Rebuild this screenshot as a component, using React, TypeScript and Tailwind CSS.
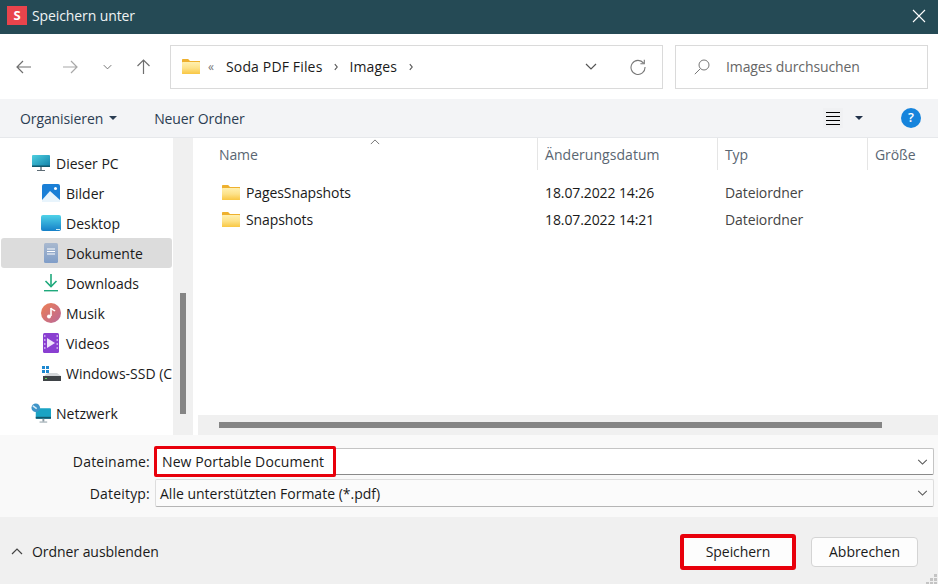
import { ReactNode } from "react";

function FolderIcon({ className, id }: { className: string; id: string }) {
  return (
    <svg viewBox="0 0 18 15" className={className}>
      <defs>
        <linearGradient id={id} x1="0" y1="0" x2="0" y2="1">
          <stop offset="0" stopColor="#fff0b0" />
          <stop offset="0.5" stopColor="#fde289" />
          <stop offset="1" stopColor="#f9c743" />
        </linearGradient>
      </defs>
      <path d="M0 1C0 .4.4 0 1 0h4.6c.4 0 .7.1 1 .4L8 2h10v3H0z" fill="#eeb02e" />
      <rect x="0" y="3" width="18" height="12" rx="0.6" fill={`url(#${id})`} />
    </svg>
  );
}

function MonitorIcon() {
  return (
    <svg viewBox="0 0 18 16" className="w-[18px] h-4">
      <defs>
        <linearGradient id="mon" x1="0" y1="0" x2="1" y2="1">
          <stop offset="0" stopColor="#4fd0e0" />
          <stop offset="1" stopColor="#0f7fa8" />
        </linearGradient>
      </defs>
      <rect width="18" height="12" rx="1" fill="url(#mon)" />
      <rect x="0" y="10.5" width="18" height="1.5" fill="#11596e" />
      <rect x="8" y="12" width="2" height="3" fill="#8a9aa3" />
      <rect x="5" y="15" width="8" height="1" fill="#5e6c75" />
    </svg>
  );
}

function PicturesIcon() {
  return (
    <svg viewBox="0 0 18 18" className="w-[18px] h-[18px]">
      <rect width="18" height="18" rx="2" fill="#1a7fd6" />
      <circle cx="13.5" cy="4.5" r="1.5" fill="#fff" />
      <path d="M0 16l8-9 10 9v2H0z" fill="#e8f4fc" />
    </svg>
  );
}

function DesktopIcon() {
  return (
    <svg viewBox="0 0 20 16" className="w-5 h-4">
      <defs>
        <linearGradient id="desk" x1="0" y1="0" x2="0" y2="1">
          <stop offset="0" stopColor="#4fd2e8" />
          <stop offset="1" stopColor="#1580c8" />
        </linearGradient>
      </defs>
      <rect width="20" height="16" rx="2" fill="url(#desk)" />
      <rect x="15" y="14" width="4" height="1" fill="#cfeef8" />
    </svg>
  );
}

function DocumentIcon() {
  return (
    <svg viewBox="0 0 14 20" className="w-[14px] h-5">
      <defs>
        <linearGradient id="doc" x1="0" y1="0" x2="0" y2="1">
          <stop offset="0" stopColor="#a9b9cf" />
          <stop offset="1" stopColor="#7f9dc8" />
        </linearGradient>
      </defs>
      <rect width="14" height="20" rx="1.5" fill="url(#doc)" />
      <path d="M3 6h8M3 8.5h8M3 11h8" stroke="#fff" strokeWidth="1" />
    </svg>
  );
}

function DownloadIcon() {
  return (
    <svg viewBox="0 0 14 18" className="w-[14px] h-[18px]">
      <path d="M7 0v12" stroke="#1fa97c" strokeWidth="1.6" />
      <path d="M1.5 7L7 12.5 12.5 7" fill="none" stroke="#1fa97c" strokeWidth="1.6" />
      <rect x="0" y="16" width="14" height="1.4" fill="#1fa97c" />
    </svg>
  );
}

function MusicIcon() {
  return (
    <svg viewBox="0 0 20 20" className="w-5 h-5">
      <defs>
        <linearGradient id="mus" x1="0" y1="0" x2="1" y2="1">
          <stop offset="0" stopColor="#ee7f52" />
          <stop offset="1" stopColor="#b9689a" />
        </linearGradient>
      </defs>
      <circle cx="10" cy="10" r="10" fill="url(#mus)" />
      <path d="M10 5v8" stroke="#fff" strokeWidth="1.6" />
      <path d="M10 5c1 2 3 2 4 3" fill="none" stroke="#fff" strokeWidth="1.6" />
      <circle cx="8" cy="13.5" r="2" fill="#fff" />
    </svg>
  );
}

function VideoIcon() {
  return (
    <svg viewBox="0 0 16 20" className="w-4 h-5">
      <rect width="16" height="20" rx="1.5" fill="#8a3fd1" />
      <path d="M4 5v10l8-5z" fill="#efe4fb" />
      <path d="M1 3h1.5M1 7h1.5M1 11h1.5M1 15h1.5M13.5 3H15M13.5 7H15M13.5 11H15M13.5 15H15" stroke="#d9c2f3" strokeWidth="1.4" />
    </svg>
  );
}

function DriveIcon() {
  return (
    <svg viewBox="0 0 19 15" className="w-[19px] h-[15px]">
      <path d="M0 0h3v3H0zM4 0h3v3H4zM0 4h3v3H0zM4 4h3v3H4z" fill="#1e88d0" />
      <path d="M3 9l3-2h9l4 3v1H2z" fill="#d4d7da" />
      <rect x="1" y="10" width="18" height="5" fill="#3f4347" />
      <rect x="3" y="12" width="2" height="1" fill="#5ad15a" />
    </svg>
  );
}

function NetworkIcon() {
  return (
    <svg viewBox="0 0 21 20" className="w-5 h-5">
      <rect x="5" y="5" width="16" height="11" rx="1" fill="#1aa3c4" />
      <rect x="5" y="14" width="16" height="2" fill="#11596e" />
      <rect x="12" y="16" width="2" height="3" fill="#8a9aa3" />
      <rect x="9" y="19" width="8" height="1" fill="#8a9aa3" />
      <circle cx="5" cy="4.5" r="4.5" fill="#3f94c8" />
      <path d="M2 2.5l4 3" stroke="#d7ecf7" strokeWidth="1.6" />
    </svg>
  );
}

function Chevron({ className, d = "M1 1l5 5 5-5" }: { className: string; d?: string }) {
  return (
    <svg viewBox="0 0 12 7" className={className} fill="none" stroke="currentColor" strokeWidth="1.2">
      <path d={d} />
    </svg>
  );
}

function Crumb() {
  return (
    <svg viewBox="0 0 5 9" className="w-1 h-2 text-[#555]" fill="none" stroke="currentColor" strokeWidth="1.4">
      <path d="M1 1l3 3.5L1 8" />
    </svg>
  );
}

function NavRow({ icon, label, child, active }: { icon: ReactNode; label: string; child?: boolean; active?: boolean }) {
  return (
    <div className={`h-[30px] ml-px w-[171px] rounded-[3px] flex items-center overflow-hidden whitespace-nowrap ${active ? "bg-[#dcdcdc]" : ""} ${child ? "pl-10" : "pl-[30px]"}`}>
      <span className="w-5 mr-[5px] flex justify-center items-center shrink-0">{icon}</span>
      <span className="text-[#1a1a1a] tracking-[0px]">{label}</span>
    </div>
  );
}

function FileRow({ name, date, id }: { name: string; date: string; id: string }) {
  return (
    <div className="h-[27px] flex items-center text-[#1a1a1a]">
      <div className="w-[347px] pl-6 flex items-center gap-1.5">
        <FolderIcon id={id} className="w-[18px] h-[15px]" />
        <span>{name}</span>
      </div>
      <span className="w-[180px]">{date}</span>
      <span className="text-[#444]">Dateiordner</span>
    </div>
  );
}

export default function App() {
  return (
    <div className="w-[938px] h-[584px] overflow-hidden relative flex flex-col bg-white text-[14px] font-['Open_Sans','Liberation_Sans',sans-serif] tracking-[-0.1px]">
      {/* title bar */}
      <div className="h-[34px] shrink-0 bg-[#254a55] flex items-center pl-[7px] pr-3 pb-[3px] text-white">
        <div className="w-5 h-[19px] bg-[#e9444c] flex items-center justify-center font-bold text-[13px]">S</div>
        <span className="ml-[5px] text-[#eef3f4]">Speichern unter</span>
        <svg viewBox="0 0 14 14" className="ml-auto w-[14px] h-[14px]" fill="none" stroke="#fff" strokeWidth="1.1">
          <path d="M1 1l12 12M13 1L1 13" />
        </svg>
      </div>

      {/* navigation */}
      <div className="h-[65px] shrink-0 flex items-center pl-4 pr-[10px]">
        <svg viewBox="0 0 16 14" className="w-4 h-[14px] text-[#6f6f6f]" fill="none" stroke="currentColor" strokeWidth="1.2">
          <path d="M15 7H1M7 1L1 7l6 6" />
        </svg>
        <svg viewBox="0 0 16 14" className="ml-[30px] w-4 h-[14px] text-[#a8a8a8]" fill="none" stroke="currentColor" strokeWidth="1.2">
          <path d="M1 7h14M9 1l6 6-6 6" />
        </svg>
        <Chevron className="ml-[25px] w-[9px] h-[6px] text-[#666]" />
        <svg viewBox="0 0 14 16" className="ml-6 w-[15px] h-4 text-[#6f6f6f]" fill="none" stroke="currentColor" strokeWidth="1.2">
          <path d="M7 15V1M1 7l6-6 6 6" />
        </svg>
        <div className="ml-[19px] w-[493px] h-[44px] border border-[#dadada] flex items-center pl-[11px] pr-4 text-[#1a1a1a]">
          <FolderIcon id="addr" className="w-[18px] h-[15px]" />
          <span className="ml-2 w-[18px] text-[#777] text-[12px] leading-none">«</span>
          <span className="tracking-[0.15px] pb-px">Soda PDF Files</span>
          <span className="ml-3"><Crumb /></span>
          <span className="ml-[11px] tracking-[0.15px] pb-px">Images</span>
          <span className="ml-3"><Crumb /></span>
          <Chevron className="ml-auto w-[12px] h-[7px] text-[#555]" />
          <svg viewBox="0 0 16 16" className="ml-[33px] w-4 h-4 text-[#777]" fill="none" stroke="currentColor" strokeWidth="1.1">
            <path d="M13.6 4.2A7 7 0 1 0 15 8" />
            <path d="M14.3.8v3.9h-3.9" />
          </svg>
        </div>
        <div className="ml-3 w-[253px] h-[44px] border border-[#dadada] flex items-center pl-[18px] text-[#666]">
          <svg viewBox="0 0 16 16" className="w-4 h-4 text-[#777]" fill="none" stroke="currentColor" strokeWidth="1">
            <circle cx="10" cy="6" r="5" />
            <path d="M6.3 9.7L.8 15.2" />
          </svg>
          <span className="ml-4">Images durchsuchen</span>
        </div>
      </div>

      {/* toolbar */}
      <div className="h-[39px] shrink-0 bg-[#f3f4f6] border-b border-[#e6e8eb] flex items-center pl-5 pr-[17px] text-[#2b3d52]">
        <span>Organisieren</span>
        <span className="ml-[6px] w-0 h-0 border-x-4 border-x-transparent border-t-[4px] border-t-[#2b3d52]" />
        <span className="ml-[37px]">Neuer Ordner</span>
        <div className="ml-auto w-5 h-5 bg-[#f0f1f3] flex flex-col items-center justify-center gap-[3px]">
          <span className="block w-[14px] h-px bg-black" />
          <span className="block w-[14px] h-px bg-black" />
          <span className="block w-[14px] h-px bg-black" />
          <span className="block w-[14px] h-px bg-black" />
        </div>
        <span className="ml-3 w-0 h-0 border-x-4 border-x-transparent border-t-[4px] border-t-[#22324a]" />
        <div className="ml-[38px] w-5 h-5 rounded-full bg-[#1684dc] text-white text-[13px] font-semibold flex items-center justify-center">?</div>
      </div>

      {/* body */}
      <div className="h-[297px] shrink-0 flex">
        <div className="w-[173px] shrink-0 pt-[10px]">
          <NavRow icon={<MonitorIcon />} label="Dieser PC" />
          <NavRow child icon={<PicturesIcon />} label="Bilder" />
          <NavRow child icon={<DesktopIcon />} label="Desktop" />
          <NavRow child active icon={<DocumentIcon />} label="Dokumente" />
          <NavRow child icon={<DownloadIcon />} label="Downloads" />
          <NavRow child icon={<MusicIcon />} label="Musik" />
          <NavRow child icon={<VideoIcon />} label="Videos" />
          <NavRow child icon={<DriveIcon />} label="Windows-SSD (C:)" />
          <div className="h-[10px]" />
          <NavRow icon={<NetworkIcon />} label="Netzwerk" />
        </div>
        <div className="w-5 shrink-0 bg-[#f0f0f0] pt-[155px] pl-[7px]">
          <div className="w-[6px] h-[121px] bg-[#858585]" />
        </div>
        <div className="flex-1 ml-[5px] min-w-0 flex flex-col">
          <div className="flex-1 relative overflow-hidden">
            <Chevron className="absolute left-[172px] top-[1px] w-[10px] h-[6px] text-[#777]" d="M1 6l5-5 5 5" />
            <div className="h-[32px] flex text-[#5a6672]">
              <div className="w-[339px] pl-[21px] pt-1.5">Name</div>
              <div className="w-[180px] border-l border-[#e5e5e5] pl-[7px] pt-1.5 tracking-[0.05px]">Änderungsdatum</div>
              <div className="w-[150px] border-l border-[#e5e5e5] pl-[7px] pt-1.5">Typ</div>
              <div className="border-l border-[#e5e5e5] pl-[7px] pt-1.5">Größe</div>
            </div>
            <div className="pt-[9px]">
              <FileRow id="f1" name="PagesSnapshots" date="18.07.2022 14:26" />
              <FileRow id="f2" name="Snapshots" date="18.07.2022 14:21" />
            </div>
          </div>
          <div className="h-5 shrink-0 bg-[#f0f0f0] pl-[21px] pt-[7px]">
            <div className="w-[663px] h-[6px] bg-[#858585]" />
          </div>
        </div>
      </div>

      {/* file name form */}
      <div className="h-[82px] shrink-0 bg-[#f9f9f9] pt-[13px] pr-1 relative text-[#1a1a1a] tracking-[0px]">
        <div className="flex items-center h-[27px]">
          <span className="w-[150px] text-right tracking-[0.2px]">Dateiname:</span>
          <div className="ml-[5px] flex-1 h-[27px] bg-white border border-[#c4c4c4] border-b-[#8a8a8a] rounded-[2px] flex items-center pl-[6px] pr-[5px]">
            <span className="tracking-[0.1px]">New Portable Document</span>
            <Chevron className="ml-auto w-[11px] h-[6px] text-[#555]" />
          </div>
        </div>
        <div className="flex items-center h-[28px] mt-1">
          <span className="w-[150px] text-right tracking-[0.2px]">Dateityp:</span>
          <div className="ml-[5px] flex-1 h-[28px] bg-[#fbfbfb] border border-[#dddddd] border-b-[#b5b5b5] rounded-[2px] flex items-center pl-[4px] pr-[5px]">
            <span>Alle unterstützten Formate (*.pdf)</span>
            <Chevron className="ml-auto w-[11px] h-[6px] text-[#555]" />
          </div>
        </div>
        <div className="absolute left-[154px] top-[11px] w-[182px] h-[31px] border-[3px] border-[#e8000b] rounded-[2px]" />
      </div>

      {/* footer */}
      <div className="flex-1 bg-[#f0f0f0] flex items-center pl-[11px] pr-5 pt-[2px] relative text-[#1a1a1a] tracking-[-0.05px]">
        <Chevron className="w-3 h-[7px] text-[#444]" d="M1 6l5-5 5 5" />
        <span className="ml-[9px]">Ordner ausblenden</span>
        <div className="ml-auto w-[116px] h-[36px] border-4 border-[#e8000b] rounded-[3px] bg-[#fdfdfd] flex items-center justify-center">Speichern</div>
        <div className="ml-[15px] w-[107px] h-[30px] border border-[#d4d4d4] rounded-[4px] bg-[#fdfdfd] flex items-center justify-center">Abbrechen</div>
        <svg viewBox="0 0 12 10" className="absolute right-0 bottom-0 w-3 h-[10px]" fill="#c4c4c4">
          <path d="M8 0h3v3H8zM4 4h3v3H4zM8 4h3v3H8zM0 8h3v2H0zM4 8h3v2H4zM8 8h3v2H8z" />
        </svg>
      </div>
    </div>
  );
}
